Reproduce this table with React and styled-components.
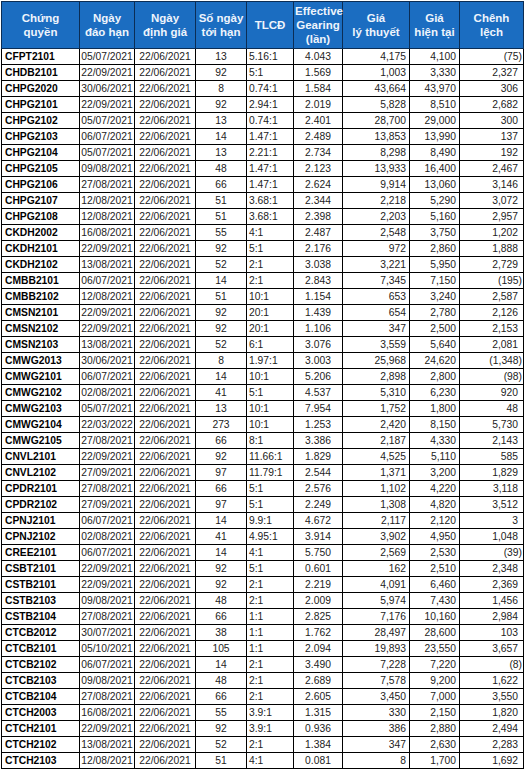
import React from "react";
import styled, { createGlobalStyle } from "styled-components";

const GlobalStyle = createGlobalStyle`
  body {
    margin: 0;
    background: #fff;
    font-family: "Liberation Sans", Arial, sans-serif;
  }
`;

const Wrap = styled.div`
  padding: 1px 0 0 1px;
`;

const Table = styled.table`
  border-collapse: collapse;
  table-layout: fixed;
  width: 522px;
  font-size: 10.3px;
  color: #1a1a1a;
`;

const Th = styled.th`
  background: #1b6dc1;
  color: #eef4fc;
  font-weight: bold;
  font-size: 11.5px;
  line-height: 14px;
  height: 46px;
  padding: 0 1px;
  text-align: center;
  vertical-align: middle;
  border: 1px solid #0b2d55;
`;

const Td = styled.td`
  height: 15px;
  line-height: 15px;
  padding: 0 ${(p) => (p.pr ? p.pr : "3px")} 0 ${(p) => (p.pl ? p.pl : "3px")};
  border: 1px solid #000;
  white-space: nowrap;
  overflow: hidden;
  text-align: ${(p) => p.align || "left"};
  font-weight: ${(p) => (p.bold ? "bold" : "normal")};
  color: ${(p) => (p.bold ? "#000" : "#222")};
`;

const widths = [78, 55, 61, 51, 47, 49, 67, 50, 64];

const rows = [
  ["CFPT2101", "05/07/2021", "13", "5.16:1", "4.043", "4,175", "4,100", "(75)"],
  ["CHDB2101", "22/09/2021", "92", "5:1", "1.569", "1,003", "3,330", "2,327"],
  ["CHPG2020", "30/06/2021", "8", "0.74:1", "1.584", "43,664", "43,970", "306"],
  ["CHPG2101", "22/09/2021", "92", "2.94:1", "2.019", "5,828", "8,510", "2,682"],
  ["CHPG2102", "05/07/2021", "13", "0.74:1", "2.401", "28,700", "29,000", "300"],
  ["CHPG2103", "06/07/2021", "14", "1.47:1", "2.489", "13,853", "13,990", "137"],
  ["CHPG2104", "05/07/2021", "13", "2.21:1", "2.734", "8,298", "8,490", "192"],
  ["CHPG2105", "09/08/2021", "48", "1.47:1", "2.123", "13,933", "16,400", "2,467"],
  ["CHPG2106", "27/08/2021", "66", "1.47:1", "2.624", "9,914", "13,060", "3,146"],
  ["CHPG2107", "12/08/2021", "51", "3.68:1", "2.344", "2,218", "5,290", "3,072"],
  ["CHPG2108", "12/08/2021", "51", "3.68:1", "2.398", "2,203", "5,160", "2,957"],
  ["CKDH2002", "16/08/2021", "55", "4:1", "2.487", "2,548", "3,750", "1,202"],
  ["CKDH2101", "22/09/2021", "92", "5:1", "2.176", "972", "2,860", "1,888"],
  ["CKDH2102", "13/08/2021", "52", "2:1", "3.038", "3,221", "5,950", "2,729"],
  ["CMBB2101", "06/07/2021", "14", "2:1", "2.843", "7,345", "7,150", "(195)"],
  ["CMBB2102", "12/08/2021", "51", "10:1", "1.154", "653", "3,240", "2,587"],
  ["CMSN2101", "22/09/2021", "92", "20:1", "1.439", "654", "2,780", "2,126"],
  ["CMSN2102", "22/09/2021", "92", "20:1", "1.106", "347", "2,500", "2,153"],
  ["CMSN2103", "13/08/2021", "52", "6:1", "3.076", "3,559", "5,640", "2,081"],
  ["CMWG2013", "30/06/2021", "8", "1.97:1", "3.003", "25,968", "24,620", "(1,348)"],
  ["CMWG2101", "06/07/2021", "14", "10:1", "5.206", "2,898", "2,800", "(98)"],
  ["CMWG2102", "02/08/2021", "41", "5:1", "4.537", "5,310", "6,230", "920"],
  ["CMWG2103", "05/07/2021", "13", "10:1", "7.954", "1,752", "1,800", "48"],
  ["CMWG2104", "22/03/2022", "273", "10:1", "1.253", "2,420", "8,150", "5,730"],
  ["CMWG2105", "27/08/2021", "66", "8:1", "3.386", "2,187", "4,330", "2,143"],
  ["CNVL2101", "22/09/2021", "92", "11.66:1", "1.829", "4,525", "5,110", "585"],
  ["CNVL2102", "27/09/2021", "97", "11.79:1", "2.544", "1,371", "3,200", "1,829"],
  ["CPDR2101", "27/08/2021", "66", "5:1", "2.576", "1,102", "4,220", "3,118"],
  ["CPDR2102", "27/09/2021", "97", "5:1", "2.249", "1,308", "4,820", "3,512"],
  ["CPNJ2101", "06/07/2021", "14", "9.9:1", "4.672", "2,117", "2,120", "3"],
  ["CPNJ2102", "02/08/2021", "41", "4.95:1", "3.914", "3,902", "4,950", "1,048"],
  ["CREE2101", "06/07/2021", "14", "4:1", "5.750", "2,569", "2,530", "(39)"],
  ["CSBT2101", "22/09/2021", "92", "5:1", "0.601", "162", "2,510", "2,348"],
  ["CSTB2101", "22/09/2021", "92", "2:1", "2.219", "4,091", "6,460", "2,369"],
  ["CSTB2103", "09/08/2021", "48", "2:1", "2.009", "5,974", "7,430", "1,456"],
  ["CSTB2104", "27/08/2021", "66", "1:1", "2.825", "7,176", "10,160", "2,984"],
  ["CTCB2012", "30/07/2021", "38", "1:1", "1.762", "28,497", "28,600", "103"],
  ["CTCB2101", "05/10/2021", "105", "1:1", "2.094", "19,893", "23,550", "3,657"],
  ["CTCB2102", "06/07/2021", "14", "2:1", "3.490", "7,228", "7,220", "(8)"],
  ["CTCB2103", "09/08/2021", "48", "2:1", "2.689", "7,578", "9,200", "1,622"],
  ["CTCB2104", "27/08/2021", "66", "2:1", "2.605", "3,450", "7,000", "3,550"],
  ["CTCH2003", "16/08/2021", "55", "3.9:1", "1.315", "330", "2,150", "1,820"],
  ["CTCH2101", "22/09/2021", "92", "3.9:1", "0.936", "386", "2,880", "2,494"],
  ["CTCH2102", "13/08/2021", "52", "2:1", "1.384", "347", "2,630", "2,283"],
  ["CTCH2103", "12/08/2021", "51", "4:1", "0.081", "8", "1,700", "1,692"],
];

const headers = [
  ["Chứng", "quyền"],
  ["Ngày", "đáo hạn"],
  ["Ngày", "định giá"],
  ["Số ngày", "tới hạn"],
  ["TLCĐ"],
  ["Effective", "Gearing", "(lần)"],
  ["Giá", "lý thuyết"],
  ["Giá", "hiện tại"],
  ["Chênh", "lệch"],
];

export default function App() {
  return (
    <Wrap>
      <GlobalStyle />
      <Table>
        <colgroup>
          {widths.map((w, i) => (
            <col key={i} style={{ width: w }} />
          ))}
        </colgroup>
        <thead>
          <tr>
            {headers.map((h, i) => (
              <Th key={i}>
                {h.map((line, j) => (
                  <div key={j}>{line}</div>
                ))}
              </Th>
            ))}
          </tr>
        </thead>
        <tbody>
          {rows.map((r, i) => {
            const neg = r[7].startsWith("(");
            return (
              <tr key={i}>
                <Td bold>{r[0]}</Td>
                <Td align="center" pl="1px" pr="1px">{r[1]}</Td>
                <Td align="center" pl="1px" pr="1px">22/06/2021</Td>
                <Td align="center">{r[2]}</Td>
                <Td pl="2px">{r[3]}</Td>
                <Td align="center">{r[4]}</Td>
                <Td align="right">{r[5]}</Td>
                <Td align="right">{r[6]}</Td>
                <Td align="right" pr={neg ? "1px" : "5px"}>
                  {r[7]}
                </Td>
              </tr>
            );
          })}
        </tbody>
      </Table>
    </Wrap>
  );
}
